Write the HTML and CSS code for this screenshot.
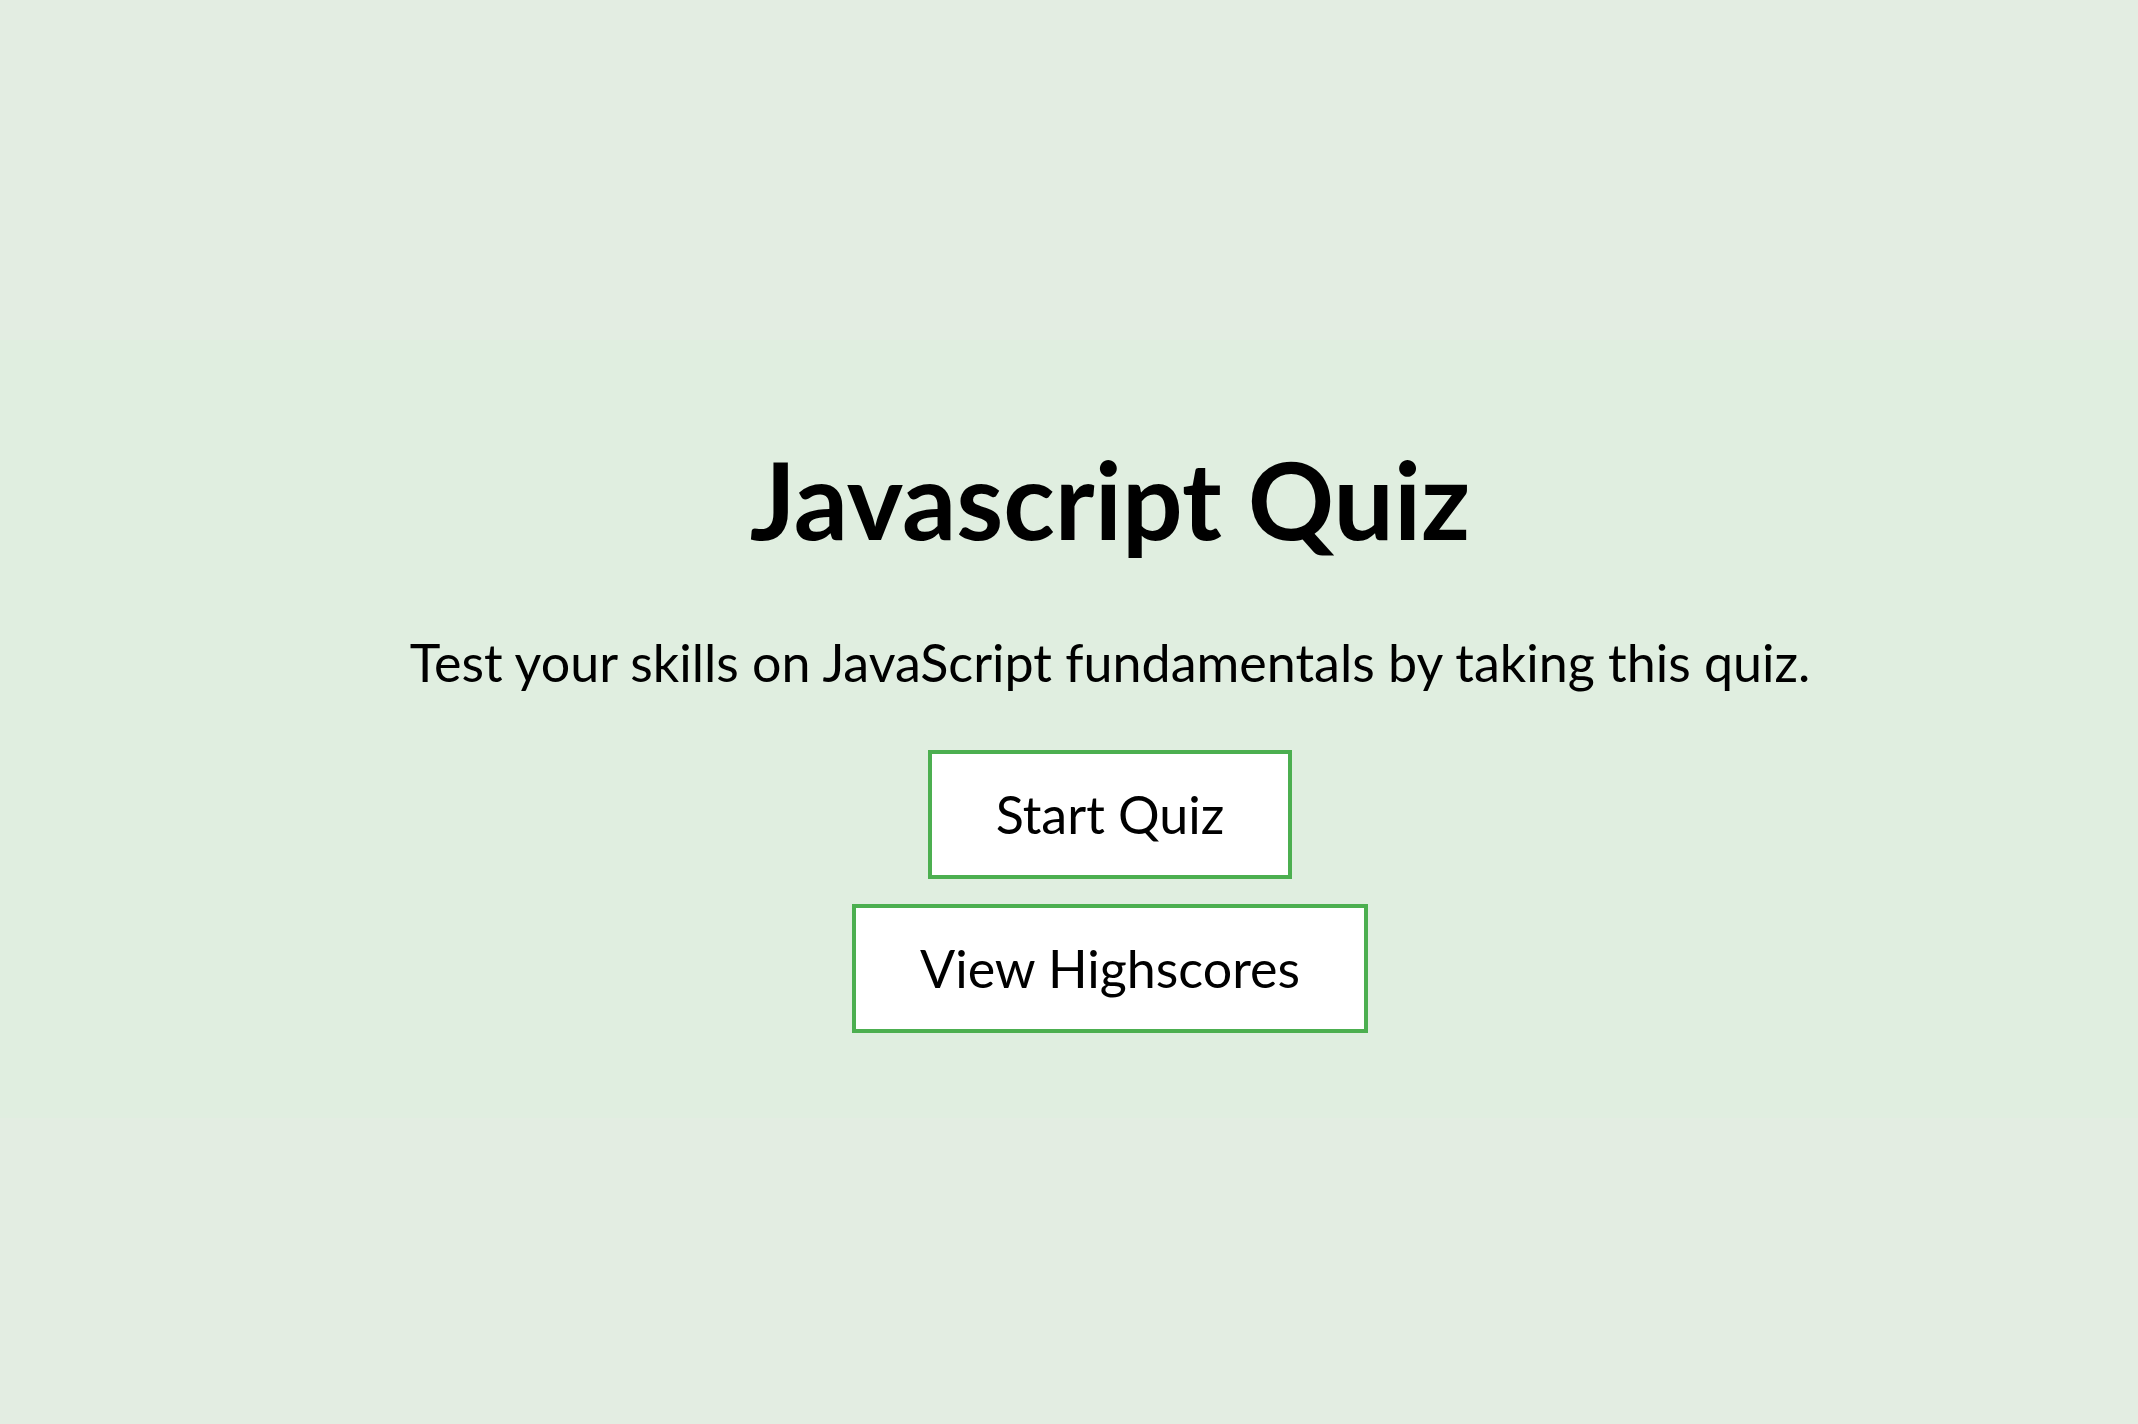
FILE: index.html
```html
<!DOCTYPE html>
<html lang="en">
<head>
<meta charset="utf-8">
<title>Javascript Quiz</title>
<link rel="stylesheet" href="styles.css">
</head>
<body>
<main class="intro">
  <h1 class="intro-title">Javascript Quiz</h1>
  <p class="intro-text">Test your skills on JavaScript fundamentals by taking this quiz.</p>
  <div class="intro-actions">
    <button class="btn" type="button">Start Quiz</button>
    <button class="btn" type="button">View Highscores</button>
  </div>
</main>
</body>
</html>
```
FILE: styles.css
```css
html, body {
  margin: 0;
  padding: 0;
}
body {
  background: #e3ede2;
  font-family: Lato, "Open Sans", "DejaVu Sans", sans-serif;
  color: #000;
  min-height: 1424px;
}
.intro {
  background: #e0eee0;
  margin-top: 340px;
  padding: 95px 0 85px 82px;
  display: flex;
  flex-direction: column;
  align-items: center;
}
.intro-title {
  margin: 0;
  font-size: 107px;
  font-weight: 700;
  line-height: 128px;
}
.intro-text {
  margin: 68px 0 0;
  font-size: 52px;
  line-height: 62px;
}
.intro-actions {
  margin-top: 57px;
  display: flex;
  flex-direction: column;
  align-items: center;
  gap: 25px;
}
.btn {
  font-family: inherit;
  font-size: 52px;
  line-height: 61px;
  color: #000;
  background: #fff;
  border: 4px solid #4caf50;
  padding: 30px 64px;
  cursor: pointer;
}
```
